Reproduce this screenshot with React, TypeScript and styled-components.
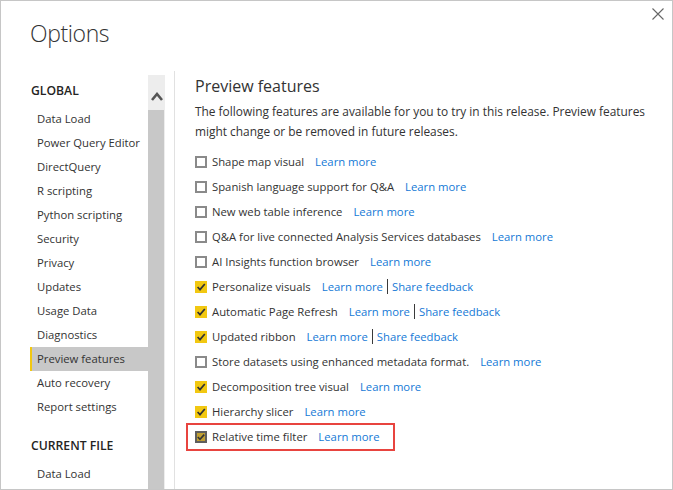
import React from "react";
import styled, { createGlobalStyle } from "styled-components";

const GlobalStyle = createGlobalStyle`
  html, body { margin: 0; padding: 0; background: #ffffff; }
  body { font-family: "Open Sans", "Segoe UI", sans-serif; color: #333333; }
  * { box-sizing: border-box; }
`;

const Dialog = styled.div`
  width: 673px;
  height: 490px;
  border: 1px solid #c6c6c6;
  background: #ffffff;
  display: flex;
  flex-direction: column;
  overflow: hidden;
`;

const Header = styled.div`
  height: 70px;
  flex: none;
  display: flex;
  justify-content: space-between;
  align-items: flex-start;
`;

const Title = styled.h1`
  margin: 17px 0 0 29px;
  font-size: 23px;
  line-height: 30px;
  font-weight: 300;
  letter-spacing: -0.4px;
  color: #333333;
`;

const CloseButton = styled.button`
  margin: 7px 8px 0 0;
  padding: 0;
  width: 12px;
  height: 12px;
  border: none;
  background: transparent;
  display: flex;
  cursor: pointer;
`;

const Body = styled.div`
  flex: 1;
  display: flex;
  min-height: 0;
`;

const Sidebar = styled.nav`
  margin-left: 29px;
  width: 118px;
  flex: none;
  padding-top: 8px;
  display: flex;
  flex-direction: column;
`;

const SectionHeading = styled.div<{ $gapTop?: number }>`
  margin-top: ${(p) => p.$gapTop ?? 0}px;
  margin-bottom: 4px;
  padding-left: 1px;
  font-size: 12.2px;
  font-weight: 600;
  line-height: 24px;
  color: #252423;
  white-space: nowrap;
`;

const NavItem = styled.div<{ $active?: boolean }>`
  height: 24px;
  line-height: 24px;
  padding-left: 7px;
  font-size: 11.3px;
  color: #333333;
  white-space: nowrap;
  background: ${(p) => (p.$active ? "#c8c8c8" : "transparent")};
  box-shadow: ${(p) => (p.$active ? "inset 2px 0 0 #f2c811" : "none")};
`;

const ScrollTrack = styled.div`
  margin-top: 4px;
  width: 17px;
  flex: none;
  background: #ededed;
  display: flex;
  flex-direction: column;
`;

const ScrollArrow = styled.div`
  height: 35px;
  flex: none;
  display: flex;
  justify-content: center;
  padding-top: 17px;
`;

const ScrollThumb = styled.div`
  flex: 1;
  margin-right: 1px;
  background: #c8c8c8;
`;

const Content = styled.main`
  margin-left: 9px;
  border-left: 1px solid #e1e1e1;
  padding: 3px 0 0 20px;
  flex: 1;
  display: flex;
  flex-direction: column;
`;

const PageHeading = styled.h2`
  margin: 0;
  font-size: 16px;
  font-weight: 400;
  line-height: 24px;
  color: #333333;
`;

const Description = styled.p`
  margin: 3px 0 0;
  font-size: 11.9px;
  line-height: 20px;
  color: #333333;
  white-space: nowrap;
`;

const FeatureList = styled.ul`
  margin: 8px 0 0;
  padding: 0;
  list-style: none;
  display: flex;
  flex-direction: column;
`;

const FeatureRow = styled.li<{ $highlight?: boolean }>`
  position: relative;
  width: fit-content;
  height: 25px;
  display: flex;
  align-items: center;
  font-size: 11.3px;
  color: #333333;
  white-space: nowrap;

  ${(p) =>
    p.$highlight
      ? `
    &::after {
      content: "";
      position: absolute;
      left: -9px;
      right: -15px;
      top: -1px;
      bottom: -2px;
      border: 2px solid #e8443f;
      pointer-events: none;
    }
  `
      : ""}
`;

const Box = styled.span<{ $state: "off" | "on" | "focus" }>`
  width: 12px;
  height: 12px;
  margin-right: 5px;
  flex: none;
  display: flex;
  align-items: center;
  justify-content: center;
  border: ${(p) =>
    p.$state === "off"
      ? "2px solid #8a8a8a"
      : p.$state === "focus"
      ? "2px solid #5e5e5e"
      : "none"};
  background: ${(p) =>
    p.$state === "on" ? "#f2c811" : p.$state === "focus" ? "#c09f32" : "#ffffff"};
`;

const Link = styled.a`
  margin-left: 11px;
  color: #1479d6;
  text-decoration: none;
  cursor: pointer;
`;

const LinkAfter = styled(Link)`
  margin-left: 0;
`;

const Separator = styled.span`
  display: inline-block;
  width: 1px;
  height: 15px;
  margin: 0 4px;
  background: #3a3a3a;
`;

const Check = ({ small }: { small?: boolean }) => (
  <svg width={small ? 8 : 12} height={small ? 8 : 12} viewBox={small ? "0 0 8 8" : "0 0 12 12"}>
    {small ? (
      <path d="M0.8 4 L3 6.3 L7.2 1.6" fill="none" stroke="#333" strokeWidth="1.6" />
    ) : (
      <path d="M2.6 6 L5 8.6 L9.8 3" fill="none" stroke="#333" strokeWidth="1.7" />
    )}
  </svg>
);

type Feature = {
  label: string;
  checked?: boolean;
  feedback?: boolean;
  highlight?: boolean;
};

const features: Feature[] = [
  { label: "Shape map visual" },
  { label: "Spanish language support for Q&A" },
  { label: "New web table inference" },
  { label: "Q&A for live connected Analysis Services databases" },
  { label: "AI Insights function browser" },
  { label: "Personalize visuals", checked: true, feedback: true },
  { label: "Automatic Page Refresh", checked: true, feedback: true },
  { label: "Updated ribbon", checked: true, feedback: true },
  { label: "Store datasets using enhanced metadata format." },
  { label: "Decomposition tree visual", checked: true },
  { label: "Hierarchy slicer", checked: true },
  { label: "Relative time filter", checked: true, highlight: true },
];

const globalItems = [
  "Data Load",
  "Power Query Editor",
  "DirectQuery",
  "R scripting",
  "Python scripting",
  "Security",
  "Privacy",
  "Updates",
  "Usage Data",
  "Diagnostics",
  "Preview features",
  "Auto recovery",
  "Report settings",
];

export default function App() {
  return (
    <>
      <GlobalStyle />
      <Dialog>
        <Header>
          <Title>Options</Title>
          <CloseButton aria-label="Close">
            <svg width="12" height="12" viewBox="0 0 12 12">
              <path d="M0.5 0.5 L11.5 11.5 M11.5 0.5 L0.5 11.5" stroke="#666" strokeWidth="1.1" />
            </svg>
          </CloseButton>
        </Header>
        <Body>
          <Sidebar>
            <SectionHeading>GLOBAL</SectionHeading>
            {globalItems.map((item) => (
              <NavItem key={item} $active={item === "Preview features"}>
                {item}
              </NavItem>
            ))}
            <SectionHeading $gapTop={15}>CURRENT FILE</SectionHeading>
            <NavItem>Data Load</NavItem>
          </Sidebar>
          <ScrollTrack>
            <ScrollArrow>
              <svg width="12" height="9" viewBox="0 0 12 9">
                <path d="M1 8 L6 2 L11 8" fill="none" stroke="#555" strokeWidth="2.6" />
              </svg>
            </ScrollArrow>
            <ScrollThumb />
          </ScrollTrack>
          <Content>
            <PageHeading>Preview features</PageHeading>
            <Description>
              The following features are available for you to try in this release. Preview features
              <br />
              might change or be removed in future releases.
            </Description>
            <FeatureList>
              {features.map((f) => (
                <FeatureRow key={f.label} $highlight={f.highlight}>
                  <Box $state={f.highlight ? "focus" : f.checked ? "on" : "off"}>
                    {f.checked && <Check small={f.highlight} />}
                  </Box>
                  {f.label}
                  <Link>Learn more</Link>
                  {f.feedback && (
                    <>
                      <Separator />
                      <LinkAfter>Share feedback</LinkAfter>
                    </>
                  )}
                </FeatureRow>
              ))}
            </FeatureList>
          </Content>
        </Body>
      </Dialog>
    </>
  );
}
